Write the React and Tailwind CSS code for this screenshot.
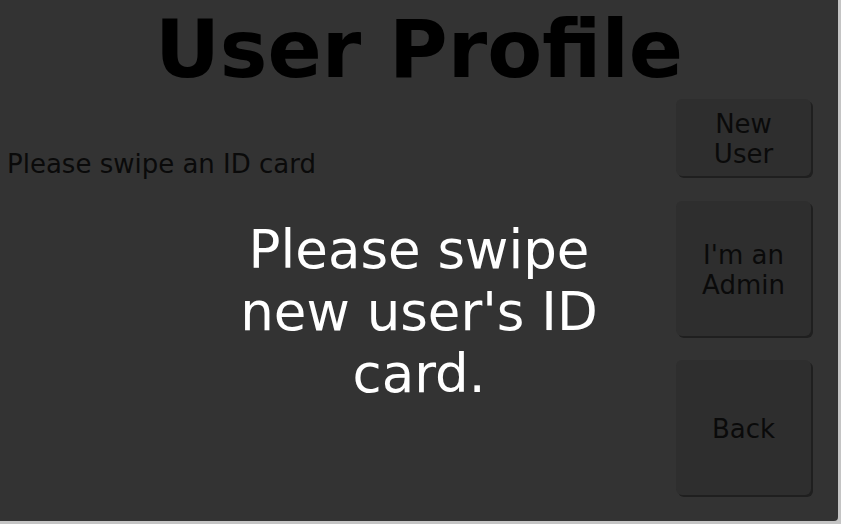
import React from "react";

const font = { fontFamily: '"DejaVu Sans", Verdana, sans-serif' };

function SideButton({ label, className }) {
  return (
    <button
      className={`flex w-[135px] items-center justify-center rounded-[6px] bg-[#2e2e2e] pt-[3px] text-center text-[26px] leading-[1.17] text-[#0a0a0a] shadow-[2px_2px_0_#1f1f1f] ${className}`}
    >
      <span className="whitespace-pre-line">{label}</span>
    </button>
  );
}

export default function App() {
  return (
    <div className="h-[524px] w-[841px] bg-[#c4c4c4]" style={font}>
      <div className="flex h-[521px] w-[838px] flex-col overflow-hidden rounded-br-[4px] bg-[#333333]">
        <h1 className="h-[99px] pt-[3px] text-center text-[80px] font-bold leading-[1.164] text-black">
          User Profile
        </h1>
        <div className="grid flex-1 grid-cols-[1fr_auto]">
          <p className="col-start-1 row-start-1 mt-[50px] self-start pl-[7px] text-[26px] leading-[1.17] text-[#0a0a0a]">
            Please swipe an ID card
          </p>
          <div className="col-span-2 col-start-1 row-start-1 flex items-center justify-center pt-[4px]">
            <p className="w-[420px] text-center text-[53px] leading-[1.164] text-white">
              Please swipe new user's ID card.
            </p>
          </div>
          <div className="col-start-2 row-start-1 flex flex-col pr-[27px] pl-0">
            <SideButton label={"New\nUser"} className="ml-[-2px] h-[77px]" />
            <SideButton label={"I'm an\nAdmin"} className="ml-[-2px] mt-[25px] h-[135px]" />
            <SideButton label="Back" className="ml-[-2px] mt-[24px] h-[135px]" />
          </div>
        </div>
      </div>
    </div>
  );
}
